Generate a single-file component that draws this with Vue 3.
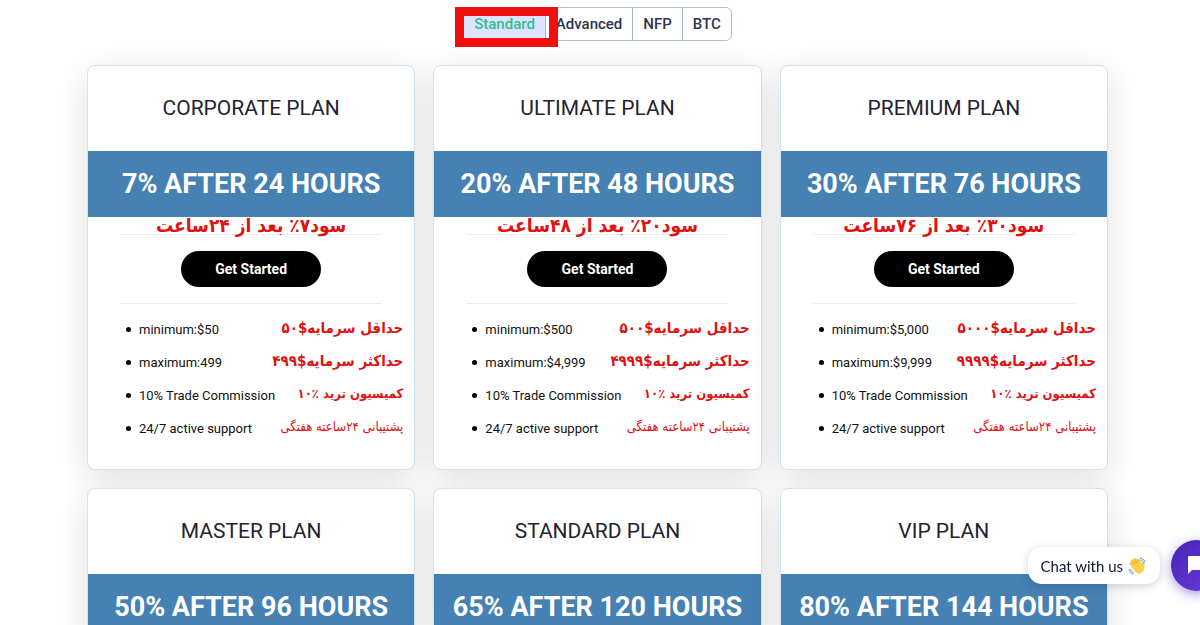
<script setup>
import { ref } from 'vue'

const tabs = ['Standard', 'Advanced', 'NFP', 'BTC']
const activeTab = ref('Standard')

const support = ['24/7 active support', 'پشتیبانی ۲۴ساعته هفتگی', 'small']
const commission = ['10% Trade Commission', 'کمیسیون ترید ٪۱۰', 'medium']

const plans = [
  {
    name: 'CORPORATE PLAN',
    rate: '7% AFTER 24 HOURS',
    note: 'سود۷٪ بعد از ۲۴ساعت',
    features: [
      ['minimum:$50', 'حداقل سرمایه$۵۰', 'large'],
      ['maximum:499', 'حداکثر سرمایه$۴۹۹', 'large'],
      commission,
      support
    ]
  },
  {
    name: 'ULTIMATE PLAN',
    rate: '20% AFTER 48 HOURS',
    note: 'سود۲۰٪ بعد از ۴۸ساعت',
    features: [
      ['minimum:$500', 'حداقل سرمایه$۵۰۰', 'large'],
      ['maximum:$4,999', 'حداکثر سرمایه$۴۹۹۹', 'large'],
      commission,
      support
    ]
  },
  {
    name: 'PREMIUM PLAN',
    rate: '30% AFTER 76 HOURS',
    note: 'سود۳۰٪ بعد از ۷۶ساعت',
    features: [
      ['minimum:$5,000', 'حداقل سرمایه$۵۰۰۰', 'large'],
      ['maximum:$9,999', 'حداکثر سرمایه$۹۹۹۹', 'large'],
      commission,
      support
    ]
  },
  { name: 'MASTER PLAN', rate: '50% AFTER 96 HOURS' },
  { name: 'STANDARD PLAN', rate: '65% AFTER 120 HOURS' },
  { name: 'VIP PLAN', rate: '80% AFTER 144 HOURS' }
]
</script>

<template>
  <main class="page">
    <nav class="tabs">
      <button
        v-for="tab in tabs"
        :key="tab"
        type="button"
        class="tab"
        :class="{ active: tab === activeTab }"
        @click="activeTab = tab"
      >{{ tab }}</button>
      <span class="marker"></span>
    </nav>

    <section class="grid">
      <article v-for="plan in plans" :key="plan.name" class="card">
        <h2 class="name">{{ plan.name }}</h2>
        <p class="rate">{{ plan.rate }}</p>
        <p v-if="plan.note" class="rate-note" lang="fa" dir="rtl">{{ plan.note }}</p>
        <template v-if="plan.features">
          <div class="action">
            <button type="button" class="start">Get Started</button>
          </div>
          <ul class="features">
            <li v-for="[text, note, size] in plan.features" :key="text">
              <span>{{ text }}</span>
              <span class="note" :class="size" lang="fa" dir="rtl">{{ note }}</span>
            </li>
          </ul>
        </template>
      </article>
    </section>

    <aside class="chat">
      <div class="bubble">
        <span>Chat with us</span>
        <svg width="18" height="18" viewBox="0 0 18 18" aria-hidden="true">
          <g fill="none" stroke-linecap="round">
            <g stroke="#f7c444" stroke-width="3">
              <path d="M3 6.5 8 12M4.2 3.8 9.5 10M7 2.6 11.5 8.5M10 3.2 13 8" />
              <path d="M15 6.5 14.6 11" />
            </g>
            <path d="M5.2 5.5 9 9.8M7.3 4.2 11 8.6" stroke="#e39b2d" stroke-width=".6" />
            <path d="M12.3 1.2C14.5 1 16.6 2.6 16.8 5M12.6 3C14 3 15 3.8 15.2 5M1 12.2C1.2 14.5 3 16.5 5.4 16.8M2.8 12.5C3 14 4 15 5.2 15.2" stroke="#4aa3dc" stroke-width="1" />
          </g>
          <path d="M3.5 8.5 10.5 5 16 7.5C16.8 12 15.5 15.5 12 16.6 9 17.2 6.5 14.5 3.5 10Z" fill="#fbcf4f" />
        </svg>
      </div>
      <button type="button" class="launcher" aria-label="Open chat">
        <svg width="24" height="22" viewBox="0 0 24 22" aria-hidden="true">
          <path d="M2 1H22Q23 1 23 2V14Q23 15 22 15H5L1 19V2Q1 1 2 1Z" fill="#fff" />
        </svg>
      </button>
    </aside>
  </main>
</template>

<style>
body {
  background: #fff;
}
</style>

<style scoped>
* {
  box-sizing: border-box;
}

.page {
  height: 100vh;
  overflow: hidden;
  padding: 7px 92px 0 87px;
  font-family: Roboto, "Liberation Sans", sans-serif;
  color: #111;
}

button {
  font-family: inherit;
  cursor: pointer;
}

.tabs {
  position: relative;
  display: flex;
  width: max-content;
  height: 34px;
  margin: 0 auto 24px;
  border: 1px solid #b3bdd0;
  border-radius: 6px;
}

.tab {
  padding: 0 10px;
  border: 0;
  border-left: 1px solid #a9b4c9;
  background: transparent;
  color: #2d3550;
  font-size: 15px;
  font-weight: 500;
}

.tab:first-child {
  border-left: 0;
}

.tab.active {
  background: #dfe3fb;
  color: #2bbf95;
}

.marker {
  position: absolute;
  top: -1px;
  left: -9px;
  width: 103px;
  height: 40px;
  border: 9px solid #f01010;
  pointer-events: none;
}

.grid {
  display: grid;
  grid-template-columns: repeat(3, 1fr);
  gap: 18px;
}

.card {
  position: relative;
  border: 1px solid #cfe4f0;
  border-radius: 8px;
  background: #fff;
  box-shadow: 0 8px 36px rgba(0, 0, 0, 0.12);
}

.name {
  margin: 0;
  line-height: 85px;
  text-align: center;
  font-size: 21px;
  font-weight: 400;
  color: #23232f;
}

.rate {
  margin: 0;
  line-height: 66px;
  background: #4681b4;
  color: #fff;
  text-align: center;
  font-size: 27px;
  font-weight: 700;
}

.rate-note {
  position: absolute;
  top: 145px;
  left: 0;
  right: 0;
  margin: 0;
  line-height: 28px;
  text-align: center;
  font-family: "DejaVu Sans Condensed", "DejaVu Sans", sans-serif;
  font-size: 19px;
  font-weight: 700;
  color: #e01212;
}

.action {
  display: flex;
  justify-content: center;
  margin: 17px 32px 0;
  padding: 16px 0;
  border-top: 1px solid #ececec;
  border-bottom: 1px solid #ececec;
}

.start {
  width: 140px;
  height: 36px;
  border: 0;
  border-radius: 18px;
  background: #000;
  color: #fff;
  font-size: 14px;
  font-weight: 700;
}

.features {
  margin: 0;
  padding: 9px 11px 24px 51px;
  list-style: none;
}

.features li {
  position: relative;
  display: flex;
  justify-content: space-between;
  height: 33px;
  line-height: 33px;
  font-size: 13px;
  white-space: nowrap;
}

.features li::before {
  content: "";
  position: absolute;
  top: 14px;
  left: -13px;
  width: 5px;
  height: 5px;
  border-radius: 50%;
  background: #000;
}

.note {
  font-family: "DejaVu Sans Condensed", "DejaVu Sans", sans-serif;
  line-height: 30px;
  color: #e01212;
}

.large {
  font-size: 15px;
  font-weight: 700;
}

.medium {
  font-size: 13px;
  font-weight: 700;
}

.small {
  font-size: 13px;
}

.chat {
  position: fixed;
  right: -22px;
  bottom: 34px;
  display: flex;
  align-items: center;
  gap: 11px;
}

.bubble {
  display: flex;
  align-items: center;
  gap: 5px;
  height: 37px;
  padding: 0 14px 0 13px;
  border-radius: 14px;
  background: #fff;
  box-shadow: 0 2px 10px rgba(0, 0, 0, 0.18);
  font-family: Lato, sans-serif;
  font-size: 15px;
  color: #10162f;
}

.launcher {
  display: flex;
  align-items: center;
  width: 51px;
  height: 51px;
  padding: 0 0 0 16px;
  border: 0;
  border-radius: 50%;
  background: linear-gradient(135deg, #4424b4, #6d3be0);
  box-shadow: 0 3px 12px rgba(90, 50, 210, 0.5);
}
</style>
